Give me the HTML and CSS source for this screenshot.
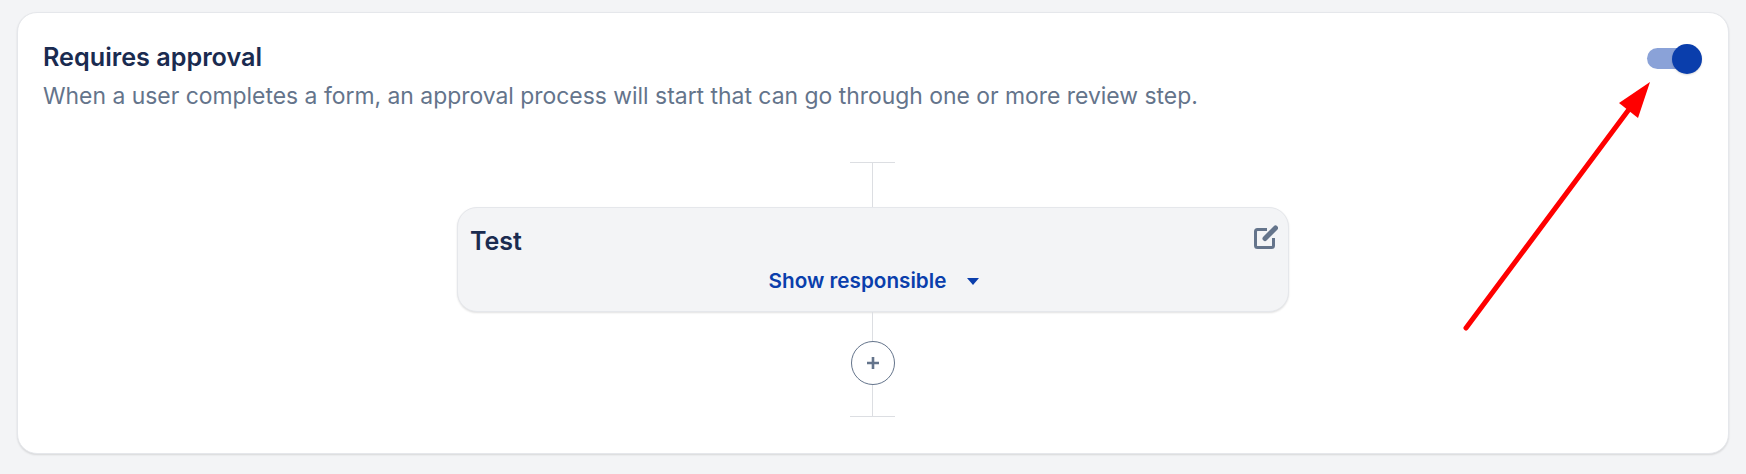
FILE: index.html
```html
<!DOCTYPE html>
<html>
  <head>
    <title>Requires approval</title>
    <link rel="stylesheet" href="styles.css">
  </head>
  <body>
    <article class="card">
      <header class="card-head">
        <div>
          <h2>Requires approval</h2>
          <p>When a user completes a form, an approval process will start that can go through one or more review step.</p>
        </div>
        <span class="toggle"><span class="knob"></span></span>
      </header>

      <div class="flow">
        <div class="cap"></div>
        <div class="line line-top"></div>
        <section class="step">
          <div class="step-head">
            <h3>Test</h3>
            <svg class="edit" viewBox="0 0 24 24" width="24" height="24">
              <path d="M13 4.5H3.5a2 2 0 0 0-2 2V20.5a2 2 0 0 0 2 2H17.5a2 2 0 0 0 2-2V13" fill="none" stroke="#64748b" stroke-width="3"/>
              <path d="M21.5 3 11 13.5" fill="none" stroke="#64748b" stroke-width="5" stroke-linecap="round"/>
            </svg>
          </div>
          <button class="show">Show responsible <span class="caret"></span></button>
        </section>
        <div class="line line-mid"></div>
        <button class="add">
          <svg viewBox="0 0 14 14" width="14" height="14">
            <path d="M7 1v12M1 7h12" stroke="#64748b" stroke-width="2.6"/>
          </svg>
        </button>
        <div class="line line-bottom"></div>
        <div class="cap"></div>
      </div>

      <svg class="arrow" viewBox="0 0 200 260" width="200" height="260">
        <path d="M4 248 168 28" stroke="#ff0000" stroke-width="5" stroke-linecap="round" fill="none"/>
        <path d="M188 2 157 23 176 38z" fill="#ff0000"/>
      </svg>
    </article>
  </body>
</html>
```

FILE: styles.css
```css
* {
  box-sizing: border-box;
}

body {
  margin: 0;
  padding: 12px 17px 20px 17px;
  height: 474px;
  overflow: hidden;
  background: #f3f4f6;
  font-family: Inter, sans-serif;
}

h2, h3, p {
  margin: 0;
}

button {
  border: none;
  background: none;
  padding: 0;
  font-family: inherit;
}

.card {
  position: relative;
  height: 442px;
  padding: 28px 28px 0 25px;
  background: #fff;
  border: 1px solid #e5e7eb;
  border-radius: 20px;
  box-shadow: 0 1px 2px rgba(0, 0, 0, 0.12);
}

.card-head {
  display: flex;
  justify-content: space-between;
}

.card-head h2 {
  font-size: 25.2px;
  line-height: 32px;
  font-weight: 600;
  color: #1a2b50;
}

.card-head p {
  margin-top: 7px;
  font-size: 22.9px;
  line-height: 32px;
  color: #64748b;
}

.toggle {
  display: block;
  position: relative;
  width: 53px;
  height: 21px;
  margin-top: 7px;
  border-radius: 11px;
  background: #8aa2d8;
}

.knob {
  position: absolute;
  top: -4px;
  right: -2px;
  width: 30px;
  height: 30px;
  border-radius: 50%;
  background: #0a3eac;
  box-shadow: 0 1px 2px rgba(0, 0, 0, 0.15);
}

.flow {
  display: flex;
  flex-direction: column;
  align-items: center;
  width: 831px;
  margin: 50px 0 0 414px;
}

.cap {
  width: 45px;
  height: 1px;
  background: #dcdee2;
}

.line {
  width: 1px;
  background: #dcdee2;
}

.line-top {
  height: 44px;
}

.line-mid {
  height: 29px;
}

.line-bottom {
  height: 31px;
}

.step {
  align-self: flex-start;
  width: 832px;
  height: 105px;
  padding: 17px 10px 0 12px;
  background: #f3f4f6;
  border: 1px solid #e5e7eb;
  border-radius: 20px;
  box-shadow: 0 1px 2px rgba(0, 0, 0, 0.12);
}

.step-head {
  display: flex;
  justify-content: space-between;
  align-items: flex-start;
}

.step-head h3 {
  font-size: 25px;
  line-height: 32px;
  font-weight: 600;
  color: #1a2b50;
}

.show {
  display: flex;
  align-items: center;
  gap: 21px;
  margin: 8px auto 0;
  font-size: 20.7px;
  line-height: 32px;
  font-weight: 600;
  color: #0a3eac;
}

.caret {
  width: 0;
  height: 0;
  border-left: 6px solid transparent;
  border-right: 6px solid transparent;
  border-top: 7px solid #0a3eac;
}

.add {
  display: flex;
  align-items: center;
  justify-content: center;
  width: 44px;
  height: 44px;
  background: #fff;
  border: 1px solid #64748b;
  border-radius: 50%;
}

.arrow {
  position: absolute;
  left: 1444px;
  top: 67px;
}
```
